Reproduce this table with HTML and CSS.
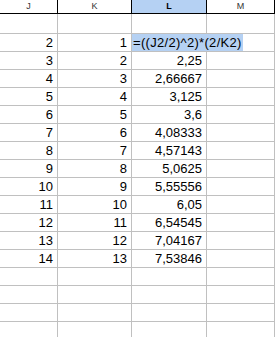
FILE: index.html
```html
<!DOCTYPE html>
<html>
<head>
<meta charset="utf-8">
<link rel="stylesheet" href="styles.css">
</head>
<body>
<div class="sheet">
  <div class="hd">J</div><div class="hd">K</div><div class="hd sel">L</div><div class="hd">M</div>
  <div class="c"></div><div class="c"></div><div class="c"></div><div class="c"></div>
  <div class="c">2</div><div class="c">1</div><div class="c f"><span class="hl">=((J2/2)^2)*(2/K2)</span></div><div class="c"></div>
  <div class="c">3</div><div class="c">2</div><div class="c">2,25</div><div class="c"></div>
  <div class="c">4</div><div class="c">3</div><div class="c">2,66667</div><div class="c"></div>
  <div class="c">5</div><div class="c">4</div><div class="c">3,125</div><div class="c"></div>
  <div class="c">6</div><div class="c">5</div><div class="c">3,6</div><div class="c"></div>
  <div class="c">7</div><div class="c">6</div><div class="c">4,08333</div><div class="c"></div>
  <div class="c">8</div><div class="c">7</div><div class="c">4,57143</div><div class="c"></div>
  <div class="c">9</div><div class="c">8</div><div class="c">5,0625</div><div class="c"></div>
  <div class="c">10</div><div class="c">9</div><div class="c">5,55556</div><div class="c"></div>
  <div class="c">11</div><div class="c">10</div><div class="c">6,05</div><div class="c"></div>
  <div class="c">12</div><div class="c">11</div><div class="c">6,54545</div><div class="c"></div>
  <div class="c">13</div><div class="c">12</div><div class="c">7,04167</div><div class="c"></div>
  <div class="c">14</div><div class="c">13</div><div class="c">7,53846</div><div class="c"></div>
  <div class="c"></div><div class="c"></div><div class="c"></div><div class="c"></div>
  <div class="c"></div><div class="c"></div><div class="c"></div><div class="c"></div>
  <div class="c"></div><div class="c"></div><div class="c"></div><div class="c"></div>
  <div class="c"></div><div class="c"></div><div class="c"></div><div class="c"></div>
</div>
</body>
</html>
```
FILE: styles.css
```css
html, body {
  margin: 0;
  padding: 0;
  background: #ffffff;
  overflow: hidden;
}
.sheet {
  display: grid;
  grid-template-columns: 58px 74px 75px 68px;
  grid-template-rows: 14px 20px repeat(17, 18px);
  font-family: "Liberation Sans", Arial, sans-serif;
  width: 275px;
}
.hd {
  box-sizing: border-box;
  border-right: 1px solid #000000;
  border-bottom: 1px solid #000000;
  font-size: 9px;
  line-height: 13px;
  text-align: center;
  color: #333333;
  background: #ffffff;
}
.hd.sel {
  background: #b5d1f3;
  color: #000000;
  font-weight: bold;
}
.c {
  box-sizing: border-box;
  border-right: 1px solid #c0c0c0;
  border-bottom: 1px solid #c0c0c0;
  font-size: 13px;
  line-height: 17px;
  text-align: right;
  padding-right: 4px;
  color: #000000;
  white-space: nowrap;
}
.c.f {
  text-align: left;
  padding: 0;
  overflow: visible;
  position: relative;
  z-index: 1;
}
.hl {
  display: inline-block;
  background: #b5d1f3;
  line-height: 17px;
  letter-spacing: 0.3px;
  padding-left: 1px;
  padding-right: 1px;
}
```
